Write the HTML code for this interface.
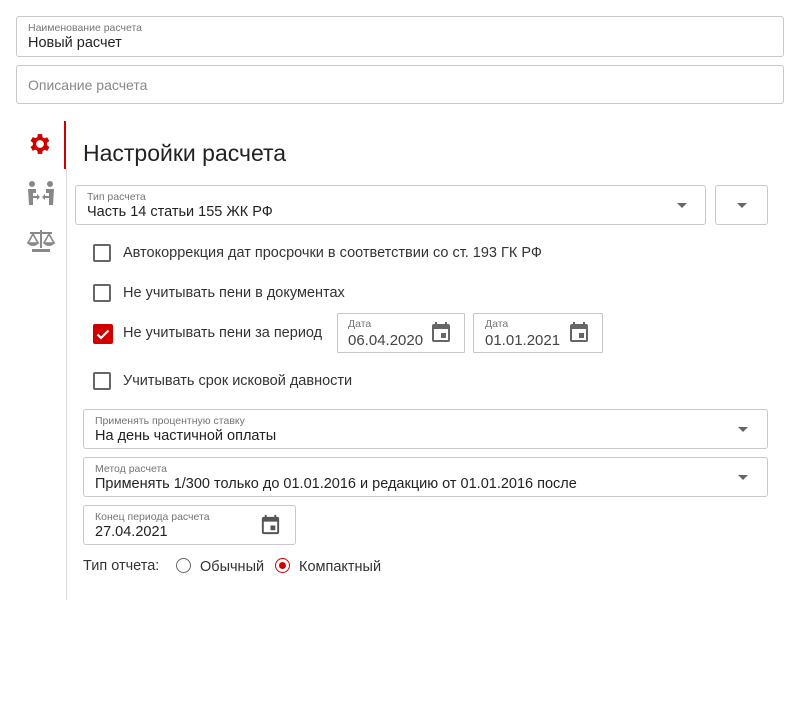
<!DOCTYPE html>
<html><head><meta charset="utf-8"><style>
body{margin:0;width:796px;height:704px;background:#fff;font-family:"Liberation Sans",sans-serif;color:#222;position:relative;overflow:hidden}
.a{position:absolute}
.f{position:absolute;border:1px solid #c8c8c8;border-radius:3px;box-sizing:border-box}
.lb{position:absolute;font-size:10.5px;color:#757575}
.v{position:absolute;font-size:14.5px;color:#222}
.cb{position:absolute;width:18px;height:18px;border:2px solid #666;border-radius:2px;box-sizing:border-box}
.ct{position:absolute;font-size:14.5px;color:#333}
.arr{position:absolute;width:0;height:0;border-left:5px solid transparent;border-right:5px solid transparent;border-top:5px solid #666}
</style></head><body>
<div class="f" style="left:16px;top:16px;width:768px;height:41px"><div class="lb" style="left:11px;top:5px">Наименование расчета</div><div class="v" style="left:11px;top:18px">Новый расчет</div></div>
<div class="f" style="left:16px;top:65px;width:768px;height:39px"><div class="v" style="left:11px;top:11px;color:#888;font-size:14px">Описание расчета</div></div>

<div class="a" style="left:64px;top:121px;width:2px;height:48px;background:#d10000"></div>
<div class="a" style="left:66px;top:168px;width:1px;height:432px;background:#ddd"></div>
<svg class="a" style="left:29px;top:133px" width="22" height="22" viewBox="3.5 2 19 20"><path fill="#d10000" d="M19.4 13a7.5 7.5 0 000-2l2.1-1.6-2-3.5-2.5 1a7.5 7.5 0 00-1.7-1L15 3h-4l-.4 2.7a7.5 7.5 0 00-1.7 1l-2.5-1-2 3.5L6.6 11a7.5 7.5 0 000 2l-2.2 1.6 2 3.5 2.5-1a7.5 7.5 0 001.7 1L11 21h4l.4-2.7a7.5 7.5 0 001.7-1l2.5 1 2-3.5zM13 15.5A3.5 3.5 0 1113 8.5a3.5 3.5 0 010 7z"/></svg>
<svg class="a" style="left:26px;top:180px" width="30" height="26" viewBox="0 0 30 26"><g fill="#888"><circle cx="6" cy="4" r="3"/><circle cx="24" cy="4" r="3"/><path d="M2 9h8v4H7v3h4v-2l3 3-3 3v-2H7v7H3z"/><path d="M28 9h-8v4h3v3h-4v-2l-3 3 3 3v-2h4v7h4z"/></g></svg>
<svg class="a" style="left:26px;top:228px" width="30" height="26" viewBox="0 0 30 26"><g fill="#888"><rect x="14" y="2" width="2" height="18"/><rect x="4" y="4" width="22" height="2"/><path d="M7 6l-5 9h10zM23 6l-5 9h10z" fill="none" stroke="#888" stroke-width="1.6"/><path d="M2 15h10a5 3 0 01-10 0zM18 15h10a5 3 0 01-10 0z"/><rect x="6" y="21" width="18" height="3"/></g></svg>

<div class="a" style="left:83px;top:140px;font-size:23px;color:#222">Настройки расчета</div>

<div class="f" style="left:75px;top:185px;width:631px;height:40px"><div class="lb" style="left:11px;top:5px">Тип расчета</div><div class="v" style="left:11px;top:18px">Часть 14 статьи 155 ЖК РФ</div><div class="arr" style="left:601px;top:17px"></div></div>
<div class="f" style="left:715px;top:185px;width:53px;height:40px"><div class="arr" style="left:21px;top:17px"></div></div>

<div class="cb" style="left:93px;top:244px"></div><div class="ct" style="left:123px;top:245px">Автокоррекция дат просрочки в соответствии со ст. 193 ГК РФ</div>
<div class="cb" style="left:93px;top:284px"></div><div class="ct" style="left:123px;top:285px">Не учитывать пени в документах</div>
<div class="a" style="left:93px;top:324px;width:20px;height:20px;background:#d10000;border-radius:2px"><svg width="20" height="20"><path d="M4.5 10.5l3.5 3.5 7.5-7.5" stroke="#fff" stroke-width="2.2" fill="none"/></svg></div>
<div class="ct" style="left:123px;top:325px">Не учитывать пени за период</div>
<div class="f" style="left:337px;top:313px;width:128px;height:40px;border-radius:1px"><div class="lb" style="left:10px;top:4px">Дата</div><div class="v" style="left:10px;top:18px;font-size:15px;color:#444">06.04.2020</div>
<svg class="a" style="left:91px;top:6px" width="24" height="24" viewBox="0 0 24 24"><path fill="#666" d="M19 4h-1V2h-2v2H8V2H6v2H5a2 2 0 00-2 2v14a2 2 0 002 2h14a2 2 0 002-2V6a2 2 0 00-2-2zm0 16H5V9h14zM12 13h5v5h-5z"/></svg></div>
<div class="f" style="left:473px;top:313px;width:130px;height:40px;border-radius:1px"><div class="lb" style="left:11px;top:4px">Дата</div><div class="v" style="left:11px;top:18px;font-size:15px;color:#444">01.01.2021</div>
<svg class="a" style="left:93px;top:6px" width="24" height="24" viewBox="0 0 24 24"><path fill="#666" d="M19 4h-1V2h-2v2H8V2H6v2H5a2 2 0 00-2 2v14a2 2 0 002 2h14a2 2 0 002-2V6a2 2 0 00-2-2zm0 16H5V9h14zM12 13h5v5h-5z"/></svg></div>
<div class="cb" style="left:93px;top:372px"></div><div class="ct" style="left:123px;top:373px">Учитывать срок исковой давности</div>

<div class="f" style="left:83px;top:409px;width:685px;height:40px"><div class="lb" style="left:11px;top:5px">Применять процентную ставку</div><div class="v" style="left:11px;top:18px">На день частичной оплаты</div><div class="arr" style="left:654px;top:17px"></div></div>
<div class="f" style="left:83px;top:457px;width:685px;height:40px"><div class="lb" style="left:11px;top:5px">Метод расчета</div><div class="v" style="left:11px;top:18px">Применять 1/300 только до 01.01.2016 и редакцию от 01.01.2016 после</div><div class="arr" style="left:654px;top:17px"></div></div>
<div class="f" style="left:83px;top:505px;width:213px;height:40px"><div class="lb" style="left:11px;top:5px">Конец периода расчета</div><div class="v" style="left:11px;top:18px">27.04.2021</div>
<svg class="a" style="left:175px;top:7px" width="23" height="23" viewBox="0 0 24 24"><path fill="#555" d="M19 4h-1V2h-2v2H8V2H6v2H5a2 2 0 00-2 2v14a2 2 0 002 2h14a2 2 0 002-2V6a2 2 0 00-2-2zm0 16H5V9h14zM12 13h5v5h-5z"/></svg></div>

<div class="ct" style="left:83px;top:558px">Тип отчета:</div>
<div class="a" style="left:176px;top:558px;width:15px;height:15px;border:1.5px solid #666;border-radius:50%;box-sizing:border-box"></div>
<div class="ct" style="left:200px;top:559px">Обычный</div>
<div class="a" style="left:275px;top:558px;width:15px;height:15px;border:1.5px solid #d10000;border-radius:50%;box-sizing:border-box"><div style="margin:2.5px;width:7px;height:7px;background:#d10000;border-radius:50%"></div></div>
<div class="ct" style="left:299px;top:559px">Компактный</div>
</body></html>
